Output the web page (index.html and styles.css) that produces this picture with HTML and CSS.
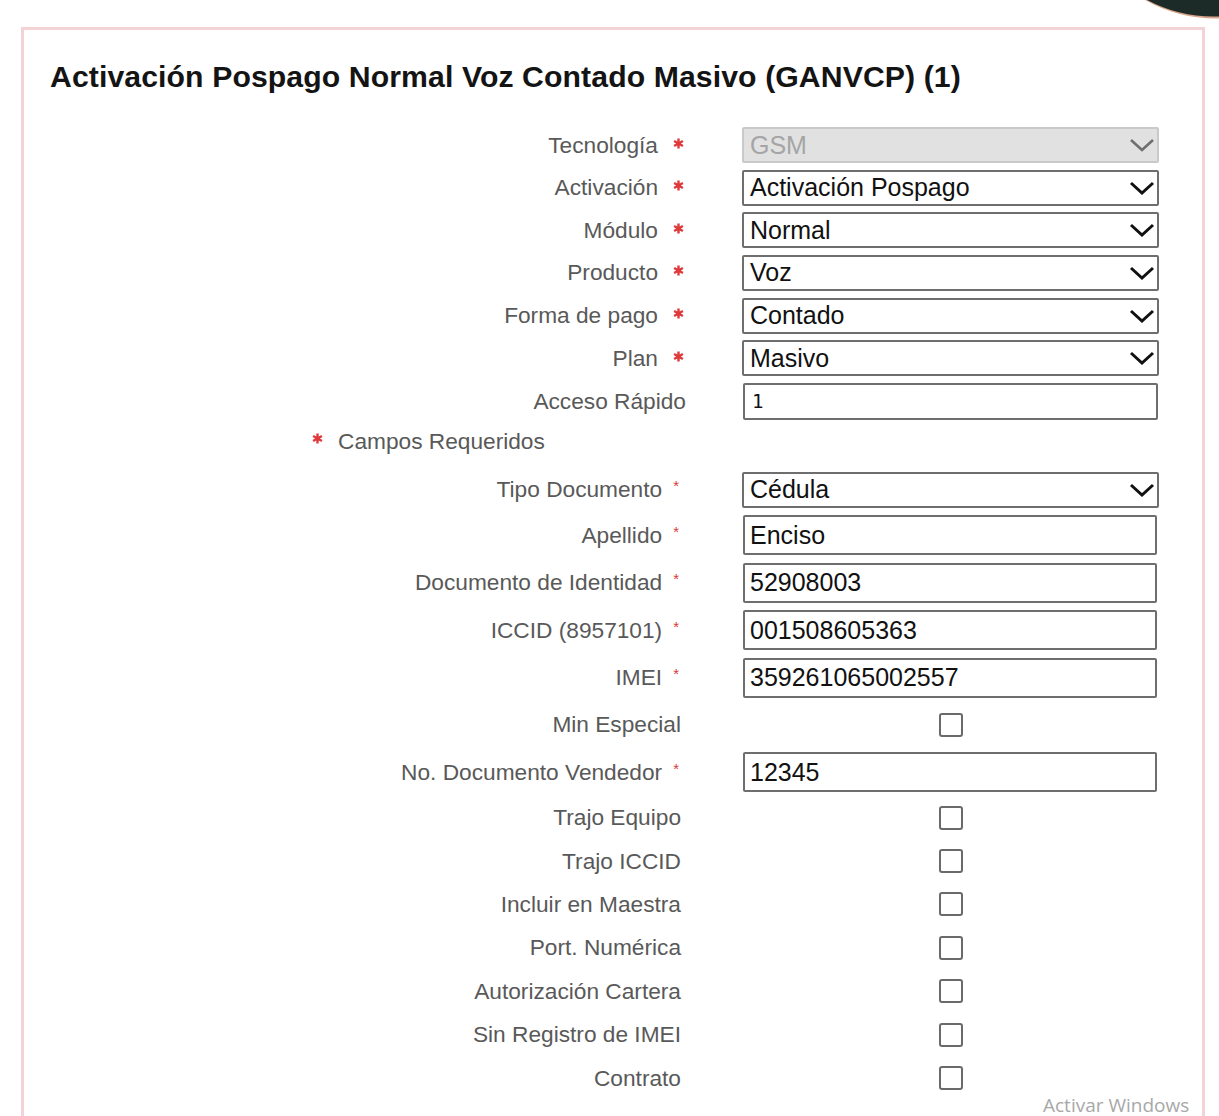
FILE: index.html
```html
<!DOCTYPE html>
<html lang="es">
<head>
<meta charset="utf-8">
<title>Activación Pospago</title>
<link rel="stylesheet" href="styles.css">
</head>
<body>
<svg class="cam" viewBox="0 0 79 20"><path class="cam-edge" d="M5 0 A145 145 0 0 0 79 18.5 L79 0 Z"/><path class="cam-body" d="M7 0 A143 143 0 0 0 79 16.5 L79 0 Z"/></svg>
<div class="panel">
  <h1 class="title">Activación Pospago Normal Voz Contado Masivo (GANVCP) (1)</h1>

  <div class="grid sec1">
    <label class="lbl">Tecnología<svg class="star" viewBox="0 0 12 12"><path d="M6 0.5V11.5M1.2 3.2L10.8 8.8M10.8 3.2L1.2 8.8"/></svg></label>
    <div class="select disabled"><span>GSM</span><svg class="chev" viewBox="0 0 26 14"><polyline points="2,2 13,12 24,2"/></svg></div>

    <label class="lbl">Activación<svg class="star" viewBox="0 0 12 12"><path d="M6 0.5V11.5M1.2 3.2L10.8 8.8M10.8 3.2L1.2 8.8"/></svg></label>
    <div class="select"><span>Activación Pospago</span><svg class="chev" viewBox="0 0 26 14"><polyline points="2,2 13,12 24,2"/></svg></div>

    <label class="lbl">Módulo<svg class="star" viewBox="0 0 12 12"><path d="M6 0.5V11.5M1.2 3.2L10.8 8.8M10.8 3.2L1.2 8.8"/></svg></label>
    <div class="select"><span>Normal</span><svg class="chev" viewBox="0 0 26 14"><polyline points="2,2 13,12 24,2"/></svg></div>

    <label class="lbl">Producto<svg class="star" viewBox="0 0 12 12"><path d="M6 0.5V11.5M1.2 3.2L10.8 8.8M10.8 3.2L1.2 8.8"/></svg></label>
    <div class="select"><span>Voz</span><svg class="chev" viewBox="0 0 26 14"><polyline points="2,2 13,12 24,2"/></svg></div>

    <label class="lbl">Forma de pago<svg class="star" viewBox="0 0 12 12"><path d="M6 0.5V11.5M1.2 3.2L10.8 8.8M10.8 3.2L1.2 8.8"/></svg></label>
    <div class="select"><span>Contado</span><svg class="chev" viewBox="0 0 26 14"><polyline points="2,2 13,12 24,2"/></svg></div>

    <label class="lbl">Plan<svg class="star" viewBox="0 0 12 12"><path d="M6 0.5V11.5M1.2 3.2L10.8 8.8M10.8 3.2L1.2 8.8"/></svg></label>
    <div class="select"><span>Masivo</span><svg class="chev" viewBox="0 0 26 14"><polyline points="2,2 13,12 24,2"/></svg></div>

    <label class="lbl">Acceso Rápido</label>
    <input class="inp quick" type="text" value="1">
  </div>

  <div class="note"><svg class="star" viewBox="0 0 12 12"><path d="M6 0.5V11.5M1.2 3.2L10.8 8.8M10.8 3.2L1.2 8.8"/></svg><span>Campos Requeridos</span></div>

  <div class="grid sec2">
    <label class="lbl">Tipo Documento<span class="req">*</span></label>
    <div class="select"><span>Cédula</span><svg class="chev" viewBox="0 0 26 14"><polyline points="2,2 13,12 24,2"/></svg></div>

    <label class="lbl">Apellido<span class="req">*</span></label>
    <input class="inp" type="text" value="Enciso">

    <label class="lbl">Documento de Identidad<span class="req">*</span></label>
    <input class="inp" type="text" value="52908003">

    <label class="lbl">ICCID (8957101)<span class="req">*</span></label>
    <input class="inp" type="text" value="001508605363">

    <label class="lbl">IMEI<span class="req">*</span></label>
    <input class="inp" type="text" value="359261065002557">

    <label class="lbl tall">Min Especial</label>
    <span class="chk"></span>

    <label class="lbl">No. Documento Vendedor<span class="req">*</span></label>
    <input class="inp" type="text" value="12345">

    <label class="lbl cb">Trajo Equipo</label>
    <span class="chk"></span>

    <label class="lbl cb">Trajo ICCID</label>
    <span class="chk"></span>

    <label class="lbl cb">Incluir en Maestra</label>
    <span class="chk"></span>

    <label class="lbl cb">Port. Numérica</label>
    <span class="chk"></span>

    <label class="lbl cb">Autorización Cartera</label>
    <span class="chk"></span>

    <label class="lbl cb">Sin Registro de IMEI</label>
    <span class="chk"></span>

    <label class="lbl cb">Contrato</label>
    <span class="chk"></span>
  </div>
</div>
<div class="watermark">Activar Windows</div>
</body>
</html>
```
FILE: styles.css
```css
html, body {
  margin: 0;
  padding: 0;
  height: 1116px;
  overflow: hidden;
  background: #ffffff;
}
body {
  position: relative;
  font-family: "Liberation Sans", Arial, sans-serif;
}
.cam {
  position: absolute;
  left: 1140px;
  top: 0;
  width: 79px;
  height: 20px;
  z-index: 2;
}
.cam-edge {
  fill: #d9a48c;
}
.cam-body {
  fill: #1d2b28;
}
.panel {
  margin: 27px 14px 0 21px;
  border: 3px solid #f3d3d5;
  border-bottom: none;
  padding: 29px 0 60px 26px;
  background: #ffffff;
}
.title {
  margin: 0;
  font-size: 30.2px;
  line-height: 36px;
  font-weight: 700;
  color: #141414;
  letter-spacing: 0.1px;
}
.grid {
  display: grid;
  grid-template-columns: 636px 417px;
  column-gap: 56px;
  align-items: center;
}
.sec1 {
  margin-top: 32px;
  row-gap: 6.67px;
}
.sec2 {
  margin-top: 15px;
  row-gap: 7.4px;
}
.lbl {
  display: flex;
  justify-content: flex-end;
  align-items: center;
  font-size: 22.7px;
  color: #595959;
  white-space: nowrap;
}
.sec2 .lbl {
  padding-right: 7px;
}
.sec2 .lbl.cb,
.sec2 .lbl.tall {
  padding-right: 5px;
}
.lbl.tall {
  height: 40px;
}
.lbl.cb {
  height: 36px;
}
.star {
  width: 11px;
  height: 11px;
  flex: none;
  fill: none;
  stroke: #e0393b;
  stroke-width: 2.6;
  stroke-linecap: butt;
}
.lbl .star {
  margin-left: 15px;
  margin-right: 2px;
  position: relative;
  top: -2px;
}
.req {
  color: #d93a3a;
  font-size: 15px;
  margin-left: 11px;
  align-self: flex-start;
  margin-top: 1px;
}
.select {
  box-sizing: border-box;
  height: 36px;
  display: flex;
  align-items: center;
  justify-content: space-between;
  border: 2px solid #6e6e6e;
  border-radius: 2px;
  padding: 0 2px 0 6px;
  font-size: 25px;
  color: #111;
  background: #fff;
}
.select.disabled {
  background: #e1e1e1;
  border-color: #c9c9c9;
  color: #a5a5a5;
}
.chev {
  width: 26px;
  height: 14px;
  fill: none;
  stroke: #111;
  stroke-width: 3;
}
.select.disabled .chev {
  stroke: #6f6f6f;
  stroke-width: 2.6;
}
.inp {
  box-sizing: border-box;
  width: 414px;
  height: 40px;
  margin: 0 0 0 1px;
  border: 2px solid #6e6e6e;
  border-radius: 2px;
  padding: 0 5px;
  font-family: "Liberation Sans", Arial, sans-serif;
  font-size: 25px;
  color: #111;
  background: #fff;
  outline: none;
}
.inp.quick {
  height: 37px;
  width: 415px;
  margin-left: 1px;
  font-family: "DejaVu Sans Mono", monospace;
  font-size: 19px;
  padding-left: 7px;
}
.chk {
  justify-self: center;
  box-sizing: border-box;
  width: 24px;
  height: 24px;
  border: 2px solid #6a6a6a;
  border-radius: 3px;
  background: #fff;
}
.note {
  margin-top: 7px;
  height: 30px;
  display: flex;
  align-items: center;
  padding-left: 262px;
  font-size: 22.7px;
  color: #595959;
}
.note .star {
  margin-right: 15px;
  position: relative;
  top: -3px;
}
.watermark {
  position: absolute;
  left: 1043px;
  top: 1092px;
  font-family: "Open Sans", "Noto Sans", sans-serif;
  font-size: 19px;
  color: #a8a8a8;
  z-index: 3;
}
```
